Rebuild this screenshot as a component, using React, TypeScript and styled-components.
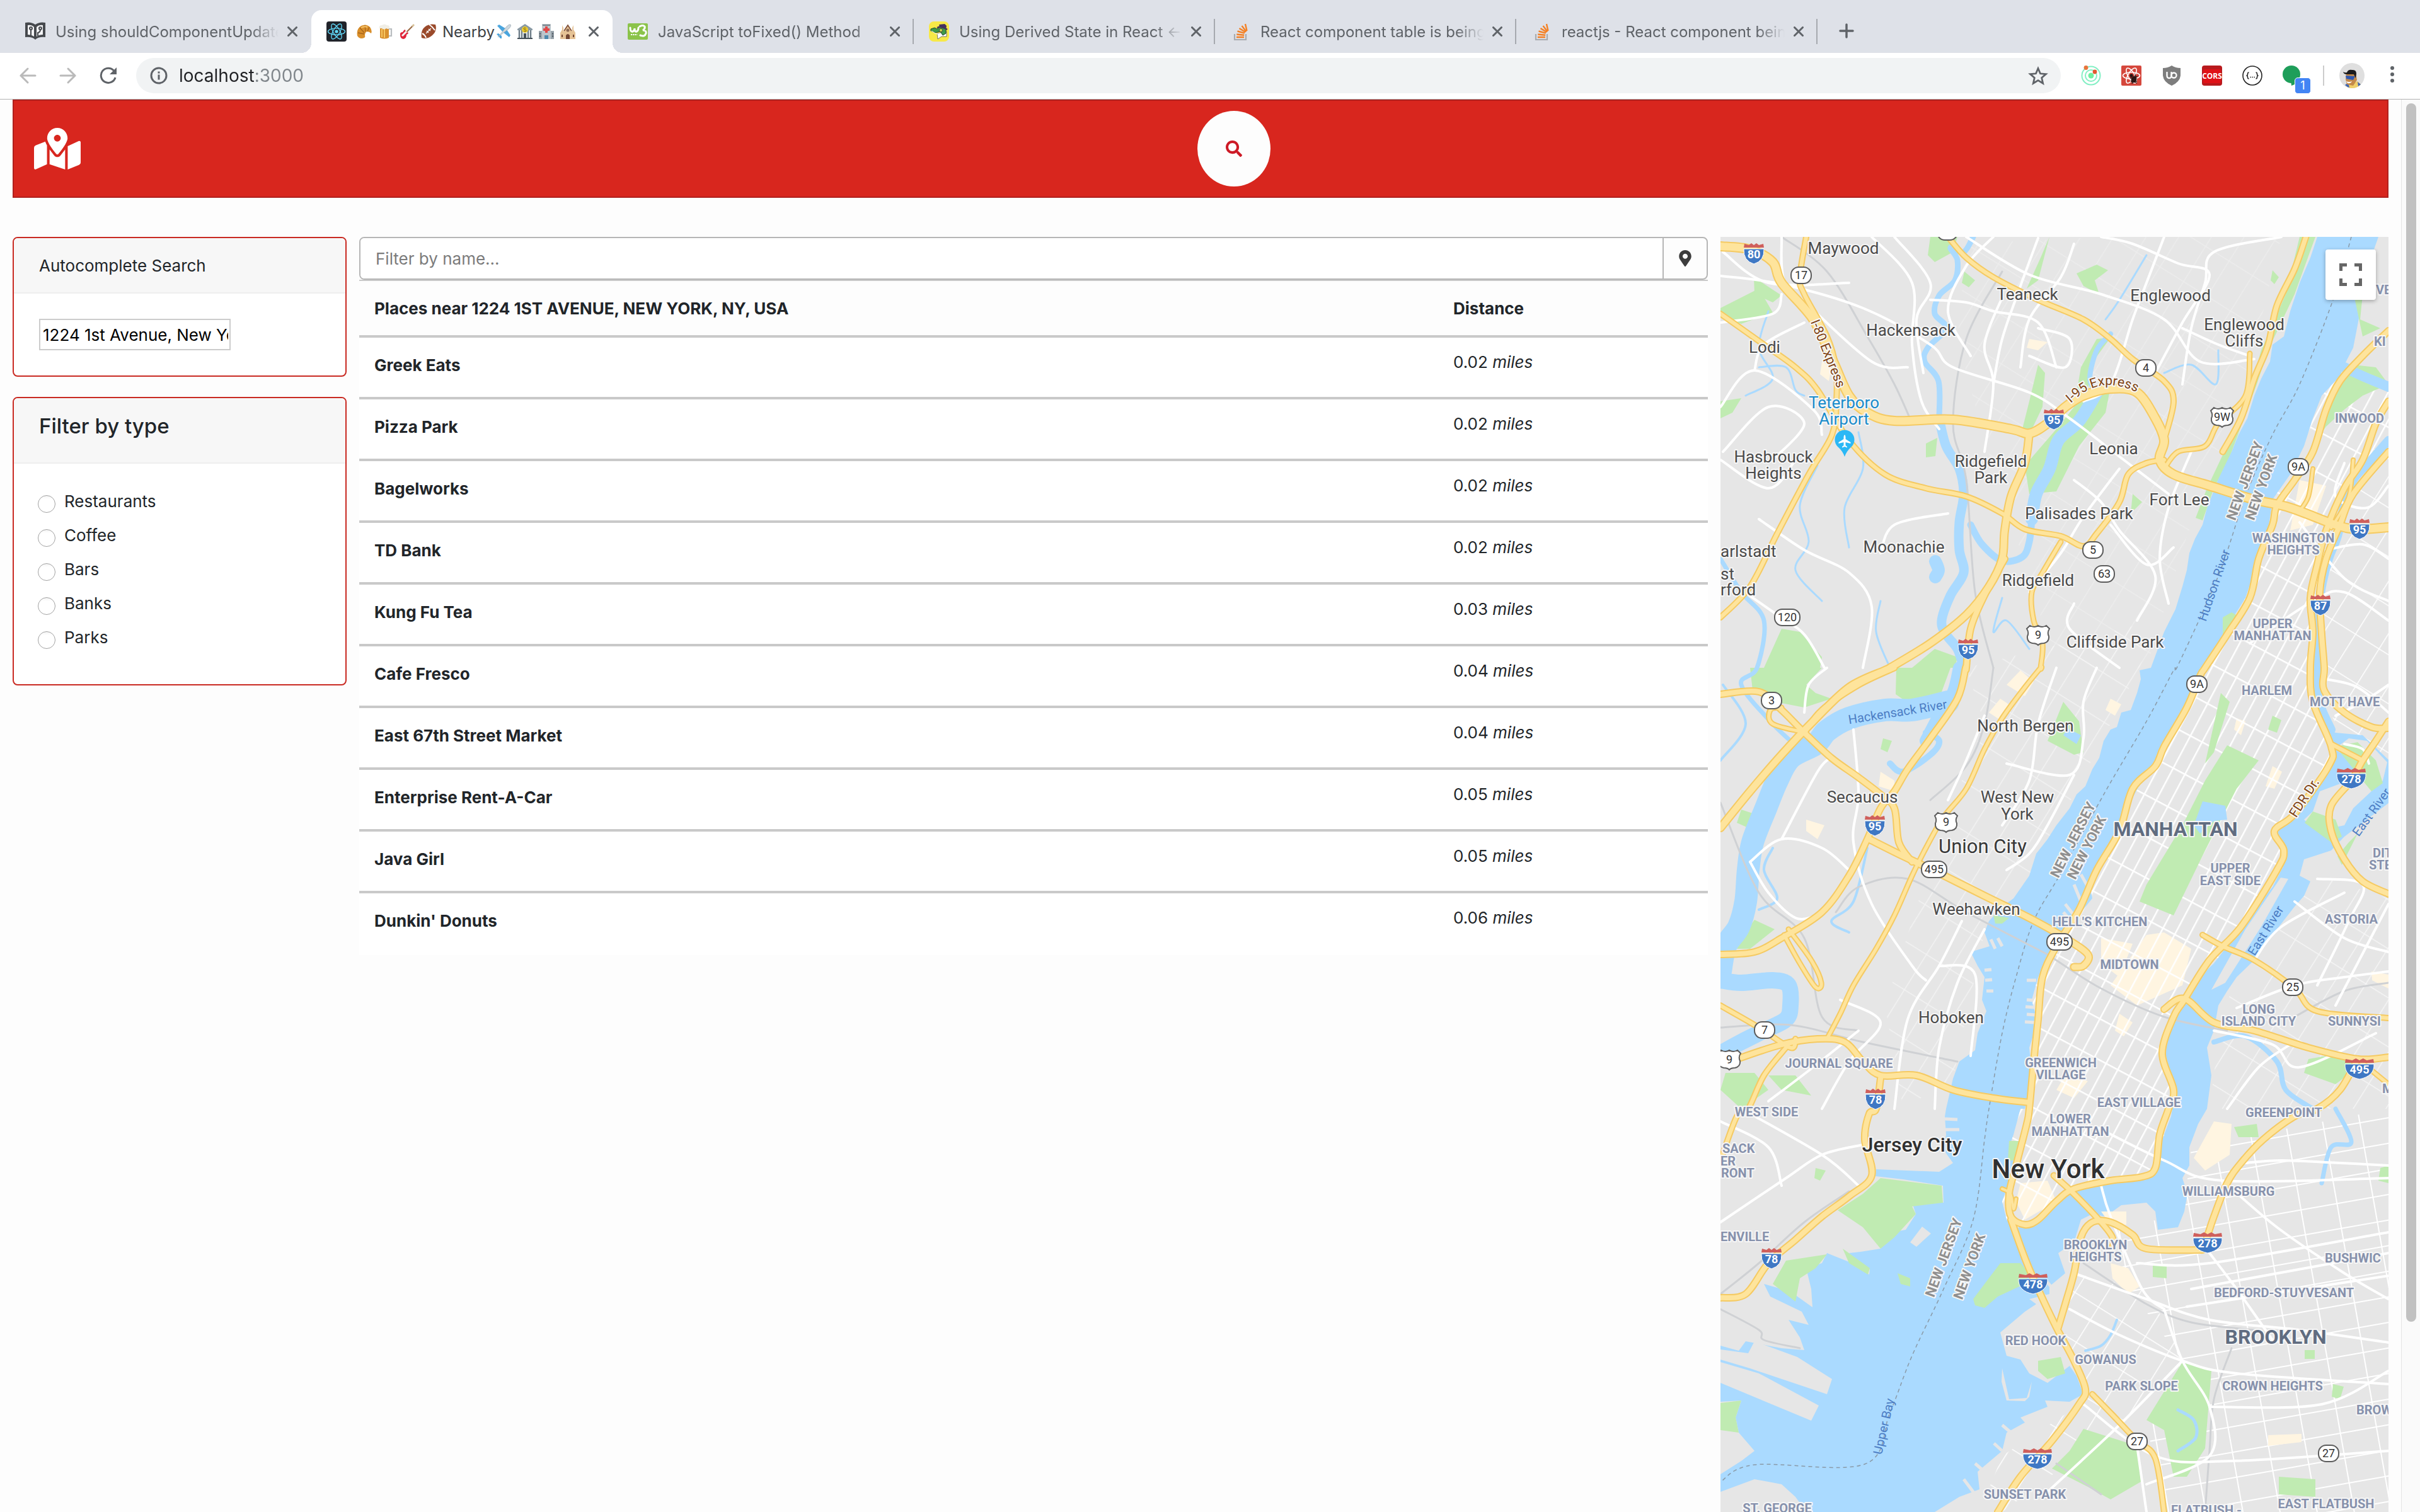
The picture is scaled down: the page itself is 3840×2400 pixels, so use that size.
import React, { useState } from "react";
import styled, { createGlobalStyle, css } from "styled-components";
import { FaMapMarkedAlt, FaMapMarkerAlt, FaSearch } from "react-icons/fa";

const GlobalStyle = createGlobalStyle`
  *, *::before, *::after { box-sizing: border-box; }
  body { margin: 0; }
  body, button, input { font-family: Inter, "Liberation Sans", sans-serif; }
  button { border: 0; padding: 0; background: none; cursor: pointer; }
`;

/* ---------- browser frame ---------- */

const Window = styled.div`
  display: flex;
  flex-direction: column;
  height: 100vh;
  overflow: hidden;
  background: #fdfdfd;
  color: #212529;
  font-size: 26px;
  line-height: 39px;
`;

const TabStrip = styled.nav`
  display: flex;
  align-items: stretch;
  height: 84px;
  padding: 16px 16px 0;
  background: #dee1e8;
`;

const Tab = styled.div<{ $active?: boolean }>`
  position: relative;
  display: flex;
  align-items: center;
  flex: 0 1 478px;
  min-width: 0;
  padding: 0 12px 0 24px;
  color: #5f6368;
  font-size: 24px;
  ${(p) =>
    p.$active &&
    css`
      background: #fff;
      color: #3c4043;
      border-radius: 16px 16px 0 0;
      &::before,
      &::after {
        content: "";
        position: absolute;
        bottom: 0;
        width: 16px;
        height: 16px;
      }
      &::before {
        left: -16px;
        background: radial-gradient(circle at 0 0, transparent 16px, #fff 16px);
      }
      &::after {
        right: -16px;
        background: radial-gradient(circle at 100% 0, transparent 16px, #fff 16px);
      }
    `}
`;

const Favicon = styled.svg`
  flex: none;
  width: 32px;
  height: 32px;
`;

const TabTitle = styled.span<{ $fade: boolean }>`
  display: flex;
  align-items: center;
  flex: 1;
  min-width: 0;
  margin: 0 6px 0 16px;
  overflow: hidden;
  white-space: nowrap;
  mask-image: ${(p) => (p.$fade ? "linear-gradient(to right, #000 calc(100% - 44px), transparent)" : "none")};
`;

const EmojiRow = styled.span<{ $after?: boolean }>`
  display: inline-flex;
  gap: 10px;
  margin: ${(p) => (p.$after ? "0 0 0 2px" : "0 10px 0 0")};
  svg {
    width: 24px;
    height: 24px;
  }
`;

const CloseButton = styled.button`
  display: grid;
  place-items: center;
  flex: none;
  width: 32px;
  height: 32px;
  color: #5f6368;
`;

const TabDivider = styled.span<{ $hidden: boolean }>`
  flex: none;
  width: 2px;
  height: 40px;
  margin: 0 -12px 0 12px;
  background: ${(p) => (p.$hidden ? "transparent" : "#a6a9af")};
`;

const NewTabButton = styled.button`
  width: 56px;
  margin-left: 18px;
  color: #5f6368;
`;

const Toolbar = styled.div`
  display: flex;
  align-items: center;
  height: 74px;
  padding: 0 16px 2px 12px;
  background: #fff;
  border-bottom: 1px solid #b2b2b2;
`;

const ToolButton = styled.button<{ $muted?: boolean }>`
  position: relative;
  display: grid;
  place-items: center;
  flex: none;
  width: 64px;
  height: 56px;
  color: ${(p) => (p.$muted ? "#bababa" : "#5f6368")};
`;

const AddressBar = styled.div`
  display: flex;
  align-items: center;
  flex: 1;
  height: 56px;
  margin: 0 16px 0 12px;
  padding: 0 20px 0 22px;
  border-radius: 28px;
  background: #f1f3f4;
  color: #5f6368;
`;

const AddressInput = styled.input`
  flex: 1;
  min-width: 0;
  margin-left: 18px;
  padding: 0;
  border: 0;
  outline: 0;
  font-size: 28px;
  line-height: 40px;
  color: transparent;
  background: linear-gradient(to right, #202124 119px, #80868b 119px);
  background-clip: text;
`;

const CountBadge = styled.span`
  position: absolute;
  left: 35px;
  top: 31px;
  width: 26px;
  height: 26px;
  border: 1px solid #fff;
  border-radius: 5px;
  background: #4285f4;
  color: #fff;
  font-size: 18px;
  line-height: 24px;
  text-align: center;
`;

const ToolDivider = styled.span`
  width: 2px;
  height: 32px;
  margin: 0 24px 0 16px;
  background: #ccc;
`;

const AvatarButton = styled.button`
  display: grid;
  width: 40px;
  height: 40px;
  margin-right: 16px;
`;

const MenuButton = styled.button`
  width: 56px;
  height: 56px;
  color: #5f6368;
`;

const Viewport = styled.div`
  display: flex;
  flex: 1;
  min-height: 0;
`;

const ScrollTrack = styled.div`
  flex: none;
  width: 30px;
  padding: 6px 6px 0 7px;
  border-left: 1px solid #e4e4e4;
  background: #fafafa;
`;

const ScrollThumb = styled.div`
  width: 16px;
  height: 86.5%;
  border-radius: 8px;
  background: #c1c1c1;
`;

/* ---------- page ---------- */

const Page = styled.div`
  display: flex;
  flex-direction: column;
  flex: 1;
  min-width: 0;
  padding: 0 20px;
  overflow: hidden;
`;

const Header = styled.header`
  display: flex;
  align-items: center;
  height: 156px;
  margin-bottom: 62px;
  padding-left: 32px;
  border: 2px solid #b0201d;
  background: #d8261e;
  color: #fff;
`;

const HeaderCenter = styled.div`
  display: flex;
  justify-content: center;
  flex: 1;
`;

const SearchButton = styled.button`
  display: grid;
  place-items: center;
  width: 116px;
  height: 120px;
  border-radius: 50%;
  background: #fdfdfd;
  color: #cd1a26;
`;

const Columns = styled.main`
  display: grid;
  grid-template-columns: minmax(0, 53fr) minmax(0, 214fr) minmax(0, 106fr);
  gap: 20px;
  flex: 1;
  min-height: 0;
`;

const Sidebar = styled.aside`
  display: flex;
  flex-direction: column;
  gap: 32px;
`;

const Card = styled.section`
  border: 2px solid #c92a22;
  border-radius: 8px;
  background: #fff;
`;

const CardHeader = styled.div`
  padding: 24px 40px 23px;
  border-bottom: 2px solid #eee;
  border-radius: 6px 6px 0 0;
  background: #f7f7f7;
`;

const CardLabel = styled.label`
  display: block;
`;

const CardTitle = styled.h2`
  margin: 0 0 15px;
  font-size: 33px;
  font-weight: 500;
  line-height: 40px;
`;

const CardBody = styled.div`
  padding: 40px;
`;

const AddressField = styled.input`
  display: block;
  width: 304px;
  max-width: 100%;
  height: 50px;
  padding: 2px 2px 2px 4px;
  border: 2px solid #ccc;
  color: #000;
  font-size: 26px;
`;

const Options = styled.fieldset`
  margin: 0;
  padding: 40px 38px;
  border: 0;
`;

const Option = styled.label`
  display: flex;
  gap: 14px;
  margin-bottom: 15px;
`;

const Radio = styled.input`
  appearance: none;
  width: 28px;
  height: 28px;
  margin: 10px 0 0;
  border: 1px solid #a2a2a2;
  border-radius: 50%;
  background: linear-gradient(#f3f3f3, #fff 20%);
  &:checked {
    background: radial-gradient(#d8261e 35%, #fff 40%);
  }
`;

const FilterGroup = styled.form`
  display: flex;
  height: 68px;
  border: 2px solid #b6b6b6;
  border-radius: 8px;
  overflow: hidden;
`;

const FilterInput = styled.input`
  flex: 1;
  min-width: 0;
  padding: 0 24px;
  border: 0;
  outline: 0;
  background: #fff;
  font-size: 26px;
  &::placeholder {
    color: #7b7b7b;
    opacity: 1;
  }
`;

const LocateButton = styled.button`
  display: grid;
  place-items: center;
  width: 70px;
  border-left: 2px solid #b6b6b6;
  color: #3d3d3d;
`;

const Table = styled.table`
  width: 100%;
  border-collapse: separate;
  border-spacing: 0;
  table-layout: fixed;
  border-top: 2px solid #c9c9c9;
  text-align: left;
`;

const HeadCell = styled.th`
  height: 90px;
  padding: 0 24px;
  border-bottom: 4px solid #c9c9c9;
  font-weight: 700;
  &:first-child {
    width: 80%;
  }
`;

const NameCell = styled.th`
  height: 98px;
  padding: 24px 24px 0;
  vertical-align: top;
  background: #fff;
  border-bottom: 4px solid #c9c9c9;
  font-weight: 700;
  tr:last-child & {
    border-color: #fff;
  }
`;

const DistanceCell = styled.td`
  padding: 24px 24px 0;
  vertical-align: top;
  background: #fff;
  border-bottom: 4px solid #c9c9c9;
  line-height: 30px;
  tr:last-child & {
    border-color: #fff;
  }
`;

const MapPane = styled.section`
  position: relative;
  min-height: 0;
  overflow: hidden;
  background: #e6e6e6;
`;

const MapCanvas = styled.svg`
  display: block;
  width: 100%;
  height: 100%;
  font-family: Roboto, sans-serif;
`;

const FullscreenButton = styled.button`
  position: absolute;
  top: 20px;
  right: 20px;
  display: grid;
  place-items: center;
  width: 80px;
  height: 80px;
  border-radius: 4px;
  background: #fff;
  box-shadow: 0 2px 6px rgba(0, 0, 0, 0.3);
`;

/* ---------- favicons and emoji ---------- */

const BookIcon = () => (
  <Favicon viewBox="0 0 32 32">
    <path d="M0 2Q9 0 16 5 23 0 32 2V25Q21 24 16 29 11 24 0 25Z" fill="#46494d" />
    <path d="M4 6Q10 5 14 9V24Q10 21 4 21ZM18 9Q22 5 28 6V21Q22 21 18 24Z" fill="#f4f4f6" />
    <g fill="none" stroke="#46494d" strokeWidth="2">
      <path d="M9 13V22M24 13Q24 17 20 18V23" />
      <circle cx="9" cy="11" r="2" />
      <circle cx="24" cy="11" r="2" />
    </g>
  </Favicon>
);

const Orbits = ({ color, width = 1 }: { color: string; width?: number }) => (
  <g fill="none" stroke={color} strokeWidth={width}>
    {[0, 60, 120].map((a) => (
      <ellipse key={a} cx="16" cy="16" rx="13.5" ry="5.2" transform={`rotate(${a} 16 16)`} />
    ))}
  </g>
);

const ReactIcon = () => (
  <Favicon viewBox="0 0 32 32">
    <rect width="32" height="32" rx="4" fill="#20232a" />
    <Orbits color="#61dafb" width={1.3} />
    <circle cx="16" cy="16" r="2.6" fill="#61dafb" />
  </Favicon>
);

const SchoolsIcon = () => (
  <Favicon viewBox="0 0 32 32">
    <rect y="3" width="32" height="26" rx="2" fill="#8bc34a" />
    <path
      d="M4 10q0 7 4 6 3-1 3-5 0 6 3 5 3-1 3-6M19 8q5-3 8 0 1 4-3 6 6 0 5 5-2 6-9 3"
      fill="none"
      stroke="#fff"
      strokeWidth="3"
      strokeLinecap="round"
    />
    <path d="M5 21h10" stroke="#fff" strokeWidth="2" strokeDasharray="2 1" />
  </Favicon>
);

const CrocodileIcon = () => (
  <Favicon viewBox="0 0 32 32">
    <rect width="32" height="32" rx="8" fill="#f7e948" />
    <path d="M13 19 28 16 28 24 20 24 14 28Z" fill="#fff" stroke="#444" strokeWidth=".7" />
    <path d="M3 12 9 10 13 12 17 9 27 12 27 19 22 22 18 16 10 18 3 15Z" fill="#3f9a48" stroke="#23482f" />
    <path d="M4 15 12 20 17 19" fill="none" stroke="#fff" />
    <path d="M16 5 25 4 28 7 27 12 17 9Z" fill="#46305e" />
    <path d="M13 10Q20 6 29 13" fill="none" stroke="#46305e" strokeWidth="2.5" />
    <circle cx="19" cy="14" r="2.6" fill="#c9d64a" stroke="#333" strokeWidth=".8" />
  </Favicon>
);

const StackIcon = () => (
  <Favicon viewBox="0 0 32 32">
    <path d="M7 20v9h18v-9" fill="none" stroke="#a9abaf" strokeWidth="2.2" />
    <g stroke="#f48024" strokeWidth="2.4">
      <path d="M10 25h12M10.300 20.500l11.900 1.200M11.500 15.500l11.300 3.200M14.500 11l9.800 6M18.500 7l7.100 9.200M24 4l2.500 11" />
    </g>
  </Favicon>
);

const Croissant = () => (
  <svg viewBox="0 0 24 24">
    <path d="M1 19Q-1 8 7 3 15-1 21 5 25 10 23 15 20 12 16 12 13 14 13 18 14 21 12 22 5 25 1 19Z" fill="#d98f2b" />
    <path d="M5 6 12 14M13 2 14 12M2 14 12 16M20 5 17 12" stroke="#a8641a" strokeWidth="1.3" />
    <path d="M7 6Q12 3 17 5" stroke="#f4c26a" strokeWidth="2" fill="none" />
  </svg>
);
const Beer = () => (
  <svg viewBox="0 0 24 24">
    <path d="M17 8h4v11h-4" fill="none" stroke="#b9bdc0" strokeWidth="2.2" />
    <path d="M3 5h14v17q-7 3-14 0Z" fill="#d9912f" />
    <path d="M6 8v13M10 8v14" stroke="#f6c661" strokeWidth="2" />
    <path d="M2 7Q1 2 6 2 10-1 14 2 19 2 18 7 16 9 13 7 9 10 6 7Z" fill="#f0eee6" />
  </svg>
);
const Guitar = () => (
  <svg viewBox="0 0 24 24">
    <path d="M8 16 21 3" stroke="#9b6b45" strokeWidth="2.2" />
    <path d="M19 3 22 0 24 2 21 5Z" fill="#d7c29a" />
    <path d="M1 18Q0 13 5 13 7 9 9 9 9 12 14 14 14 16 11 17 11 23 6 24 1 23 1 18Z" fill="#e0263a" />
    <path d="M4 19 11 12" stroke="#f4f4f4" strokeWidth="3" />
  </svg>
);
const Football = () => (
  <svg viewBox="0 0 24 24">
    <path d="M1 22Q-1 10 7 4 14-1 23 1 26 11 18 18 10 25 1 22Z" fill="#9a4a2b" />
    <path d="M2 15Q6 17 8 22M13 1Q18 4 22 10" stroke="#fff" strokeWidth="2" fill="none" />
    <path d="M8 15 16 7M9 11l3 3M12 8l3 3" stroke="#fff" strokeWidth="1.3" />
  </svg>
);
const Plane = () => (
  <svg viewBox="0 0 24 24">
    <path d="M2 3 5 1 18 9 11 13ZM21 21 23 18 15 6 11 13ZM1 16 4 15 9 19 9 23 7 23Z" fill="#4aa5de" />
    <path d="M3 21 17 4Q21 0 23 1 25 3 20 8Z" fill="#cdd7de" stroke="#8f9da6" strokeWidth=".6" />
  </svg>
);
const Bank = () => (
  <svg viewBox="0 0 24 24">
    <path d="M0 8 12 0 24 8V10H0Z" fill="#8a9aa5" />
    <path d="M1 10h22v12H1Z" fill="#dfe5e8" />
    <path d="M3 10v12M7 10v12M17 10v12M21 10v12" stroke="#6d7c87" strokeWidth="2" />
    <path d="M10 15h4v8h-4ZM0 22h24v2H0Z" fill="#46515a" />
    <circle cx="12" cy="9" r="5" fill="#f2cf2e" />
    <path d="M14 7q-4-2-4 .5 0 1.500 2 1.500 2 0 2 1.500 0 2.500-4 .5" fill="none" stroke="#6b5a12" />
  </svg>
);
const Hospital = () => (
  <svg viewBox="0 0 24 24">
    <path d="M0 11h24v13H0Z" fill="#9aa5ad" />
    <path d="M5 0h14v24H5Z" fill="#bcc5cb" />
    <path d="M6 2h12" stroke="#78838b" strokeWidth="2" />
    <path d="M10 4h4v3h3v4h-3v3h-4v-3H7V7h3Z" fill="#e04848" />
    <path d="M2 14v8M22 14v8" stroke="#5b666f" strokeWidth="2" strokeDasharray="3 1" />
    <path d="M9 18h6v6H9Z" fill="#4d89ad" />
  </svg>
);
const Church = () => (
  <svg viewBox="0 0 24 24">
    <path d="M0 14 3 9V2l2 4V12L12 3 19 12V6l2-4V9l3 5V24H0Z" fill="#e5c295" />
    <path d="M6 11 12 2 18 11" fill="none" stroke="#7b4a33" strokeWidth="1.6" />
    <circle cx="12" cy="10" r="2.500" fill="#8d6a55" />
    <path d="M9 24V18q3-4 6 0v6ZM2 17h2v4H2ZM20 17h2v4h-2Z" fill="#714633" />
  </svg>
);

const tabs = [
  { icon: <BookIcon />, title: "Using shouldComponentUpdate", divider: false },
  { icon: <ReactIcon />, title: "Nearby", active: true, divider: false },
  { icon: <SchoolsIcon />, title: "JavaScript toFixed() Method", divider: true },
  { icon: <CrocodileIcon />, title: "Using Derived State in React ←", divider: true },
  { icon: <StackIcon />, title: "React component table is being", divider: true },
  { icon: <StackIcon />, title: "reactjs - React component being", divider: true },
];

const Cross = () => (
  <svg width="16" height="16" viewBox="0 0 16 16" stroke="currentColor" strokeWidth="3" strokeLinecap="round">
    <path d="M1.500 1.500l13 13M14.500 1.500l-13 13" />
  </svg>
);

const extensions = [
  {
    name: "Apollo",
    icon: (
      <Favicon viewBox="0 0 32 32">
        <g fill="none" stroke="#84efc4" strokeWidth="2">
          <circle cx="16" cy="16" r="14.500" />
          <circle cx="16" cy="16" r="9" />
        </g>
        <circle cx="16" cy="16" r="4.500" fill="#6ff0a0" />
        <circle cx="8" cy="3.500" r="3.400" fill="#e8743b" />
        <circle cx="22" cy="10" r="3.400" fill="#e2582f" />
      </Favicon>
    ),
  },
  {
    name: "React Developer Tools",
    icon: (
      <Favicon viewBox="0 0 32 32">
        <rect width="32" height="32" rx="2" fill="#d5473c" />
        <Orbits color="#fff" width={1.6} />
        <g stroke="#2a1614" strokeWidth="1.300">
          <ellipse cx="20" cy="22" rx="3.500" ry="5" fill="#2a1614" transform="rotate(25 20 22)" />
          <circle cx="16" cy="16" r="2" fill="#2a1614" />
          <path d="M14 20h4l8-3M15 25l10 0M17 29l1-4 7 3M22 14l1 5" fill="none" />
        </g>
      </Favicon>
    ),
  },
  {
    name: "uBlock",
    icon: (
      <Favicon viewBox="0 0 32 32">
        <path d="M16 0Q22 4 30 4V16Q29 26 16 32 3 26 2 16V4Q10 4 16 0Z" fill="#7d7d7d" />
        <path d="M8.500 10v6q0 4 3.500 4t3.500-4v-6" fill="none" stroke="#fff" strokeWidth="2.300" />
        <circle cx="19.500" cy="15.500" r="4" fill="none" stroke="#fff" strokeWidth="2.300" />
      </Favicon>
    ),
  },
  {
    name: "CORS",
    icon: (
      <Favicon viewBox="0 0 32 32">
        <rect width="32" height="32" rx="4" fill="#b81a1d" />
        <rect x="2" y="6" width="28" height="22" rx="2" fill="#df1117" />
        <text x="16" y="21" textAnchor="middle" fontFamily="Open Sans, sans-serif" fontWeight="700" fontSize="12" fill="#fff">
          CORS
        </text>
      </Favicon>
    ),
  },
  {
    name: "JSON Viewer",
    icon: (
      <Favicon viewBox="0 0 32 32">
        <circle cx="16" cy="16" r="15" fill="#fff" stroke="#222" strokeWidth="1.600" />
        <path
          d="M10.500 11q-2 0-2 2.500t-2 2.500q2 0 2 2.500t2 2.500M21.500 11q2 0 2 2.500t2 2.500q-2 0-2 2.500t-2 2.500"
          fill="none"
          stroke="#222"
          strokeWidth="1.500"
        />
        <path d="M12.500 18.500h1.500M15.500 18.500h1.500M18.500 18.500h1.500" stroke="#222" strokeWidth="1.500" />
      </Favicon>
    ),
  },
  {
    name: "Hangouts",
    badge: "1",
    icon: (
      <Favicon viewBox="0 0 32 32">
        <circle cx="14" cy="14" r="14" fill="#1e9e5a" />
        <path d="M13 24h6v6l-5 2Z" fill="#1e9e5a" />
      </Favicon>
    ),
  },
];

const Avatar = () => (
  <svg width="40" height="40" viewBox="0 0 40 40">
    <circle cx="20" cy="20" r="20" fill="#dfdfdf" />
    <path d="M10 36Q13 31 18 33L29 29 34 34Q28 40 20 40 14 40 10 36Z" fill="#f0cf6a" />
    <path d="M9 35 14 31 16 39Q12 38 9 35ZM29 30 34 34 30 37Z" fill="#3d64b5" />
    <path d="M11 17 26 16 28 27 22 36 12 34 10 26Z" fill="#c58a4a" />
    <path d="M6 14Q9 16 12 15 14 10 20 11 27 10 27 17L26 24 23 18 12 18Q7 18 6 14Z" fill="#1b1b1d" />
    <path d="M10 20 25 21 22 27 11 25Z" fill="#2f58b0" />
    <path d="M11 29Q16 31 20 29 18 33 13 32Z" fill="#fff" />
  </svg>
);

/* ---------- map ---------- */

/*
 * Geometry is written on three stacked survey sheets: n (north), m (middle)
 * and s (south). A letter in a line switches sheet; trace() turns the sheet
 * positions into map units.
 */
type Point = [number, number];

const sheets: Record<string, (x: number, y: number) => Point> = {
  n: (x, y) => [(x - 14) / 1.4, (y - 36) / 2.24],
  m: (x, y) => [(x - 14) / 1.4, y / 2.24 + 684],
  s: (x, y) => [(x - 14) / 1.4, y / 2.45 + 1384],
};

const at = (sheet: string, x: number, y: number): Point => {
  const [px, py] = sheets[sheet](x, y);
  return [Math.round(px), Math.round(py)];
};

const trace = (line: string): Point[] => {
  let sheet = "n";
  const points: Point[] = [];
  line
    .trim()
    .split(/\s+/)
    .forEach((token) => {
      if (token in sheets) {
        sheet = token;
        return;
      }
      const [x, y] = token.split(",").map(Number);
      points.push(at(sheet, x, y));
    });
  return points;
};

const area = (line: string) => `M${trace(line).join("L")}Z`;

const curve = (line: string) => {
  const p = trace(line);
  let d = `M${p[0]}`;
  for (let i = 0; i < p.length - 1; i++) {
    const a = p[i - 1] ?? p[i];
    const b = p[i];
    const c = p[i + 1];
    const e = p[i + 2] ?? c;
    d += `C${b[0] + (c[0] - a[0]) / 6},${b[1] + (c[1] - a[1]) / 6} ${c[0] - (e[0] - b[0]) / 6},${c[1] - (e[1] - b[1]) / 6} ${c}`;
  }
  return d;
};

const bayAndRivers =
  "n 1340,36 1325,110 1300,200 1280,300 1265,390 1240,420 1235,480 1215,540 1200,600 1185,680 1165,740 1150,800 1130,850 1115,920 1095,1000 1085,1060 1068,1110 1055,1160 1050,1220 1040,1280 1025,1360 1000,1440 985,1500 970,1568 " +
  "m 945,10 948,40 940,90 925,150 905,160 895,210 880,220 865,260 855,320 840,360 825,420 805,450 790,500 760,560 740,610 715,660 700,740 665,820 640,850 610,900 600,940 612,990 570,1010 585,1060 600,1100 595,1180 605,1220 585,1300 580,1360 545,1400 530,1460 515,1568 " +
  "s 512,30 515,100 510,160 530,210 500,245 360,235 358,262 420,275 508,300 510,365 440,362 448,410 425,470 395,480 370,545 325,555 300,560 320,600 346,625 344,645 300,595 250,560 240,600 205,620 215,700 218,772 170,710 110,680 125,730 195,790 210,840 165,820 190,890 200,938 150,930 70,905 55,940 14,920 14,1140 60,1135 48,1200 55,1260 90,1330 60,1370 14,1420 14,1490 90,1440 150,1460 180,1510 205,1568 " +
  "490,1568 545,1510 590,1480 585,1410 640,1330 650,1260 690,1220 680,1200 740,1160 735,1135 790,1140 820,1110 805,1040 790,1000 740,1065 700,1030 680,975 650,960 635,870 690,790 715,760 700,740 745,720 745,690 780,640 765,560 800,520 815,430 840,410 870,420 905,375 960,365 980,400 985,470 1030,460 1045,400 1052,330 1040,270 1055,220 1055,150 1075,60 1095,0 " +
  "m 1095,1568 1105,1450 1095,1350 1110,1290 1120,1200 1140,1150 1160,1100 1200,1040 1230,970 1290,850 1310,810 1325,760 1300,740 1310,680 1370,650 1400,600 1500,480 1500,330 1440,240 1380,230 1340,200 n 1350,1100 1400,490 1420,430 1430,350 1440,250 1450,150 1475,36";

const manhattan =
  "n 1400,490 1390,530 1350,600 1330,680 1310,780 1280,880 1240,970 1230,1080 1210,1180 1180,1320 1130,1450 1090,1568 " +
  "m 1080,0 1070,60 1030,180 1010,250 990,320 950,400 920,490 890,580 870,660 835,770 840,820 800,900 745,1020 720,1100 705,1180 718,1260 700,1350 705,1440 690,1568 " +
  "s 680,0 665,100 655,150 668,220 640,360 650,430 670,462 700,450 750,370 800,310 870,290 960,270 990,200 1000,100 1015,30 " +
  "m 1025,1500 1010,1420 1000,1350 1020,1260 1040,1190 1060,1130 1110,1050 1150,970 1190,880 1240,780 1265,700 1265,640 1250,590 1255,560 1290,520 1320,440 1370,340 1375,290 1350,200 1325,100 1325,0 " +
  "n 1330,1568 1340,1400 1350,1250 1375,1150 1380,1040 1400,950 1440,870 1470,780 1500,730 1500,560 1450,520";

const piers = [
  "s 14,935 75,950 90,905 185,965 262,1050 250,1110 80,1010 14,975",
  "s 14,985 100,1030 232,1155 215,1212 14,1065",
  "s 640,1010 655,1130 695,1125 705,1060 700,1120 690,1138 650,1135 638,1060",
  "s 436,520 462,458 482,485 450,537",
  "m 1275,750 1258,745 1180,930 1105,1145 1135,1120 1215,920",
  "m 1378,290 1410,250 1450,260 1495,335 1485,400 1420,500 1400,560 1340,580 1310,540 1330,510 1345,440 1395,410 1430,340",
];

/* Slips along the Hudson waterfront, drawn as short strokes over the water. */
const slips = [
  "m 800,770 815,830 m 815,830 800,770",
  "m 780,840 800,880",
  "m 775,870 795,905",
  "m 815,735 835,790",
  "m 695,1180 712,1182",
  "m 692,1205 712,1208",
  "m 695,1232 714,1235",
  "m 690,1258 712,1262",
  "m 715,1110 695,1112",
  "m 600,1075 616,1072",
  "m 602,1110 618,1108",
  "m 605,1150 620,1148",
  "m 630,960 640,990",
  "m 615,965 624,1000",
  "s 512,40 540,42",
  "s 514,80 545,82",
  "s 735,730 720,700",
  "s 750,695 735,665",
  "s 640,1330 622,1300",
  "s 660,1260 640,1230",
  "s 600,1410 580,1380",
  "s 580,1500 555,1440",
];

const parks = [
  "n 1300,36 1335,36 1290,240 1230,440 1205,560 1150,800 1110,930 1085,1045 1070,1035 1095,930 1180,640 1215,440 1270,240",
  "n 480,36 540,36 530,90 490,125 474,100",
  "n 14,290 100,220 130,305 60,345 14,320",
  "n 88,180 150,245 130,270 90,240",
  "n 700,620 720,490 735,520 730,640 700,740 685,720",
  "n 880,395 845,470 820,640 880,570 870,660 810,780 760,940 700,950 690,850 760,720 800,640 815,500 850,400",
  "n 805,165 850,135 875,155 845,190 855,240 820,210",
  "n 745,36 720,190 695,220 725,110",
  "n 1390,560 1420,490 1470,500 1498,560 1440,600 1400,650 1360,710 1340,760",
  "n 1420,230 1440,240 1435,330 1480,360 1440,390",
  "n 1240,155 1255,180 1245,205 1236,190",
  "n 470,770 495,750 492,815 470,820",
  "n 1130,1390 1150,1370 1165,1385 1130,1450",
  "n 150,1430 190,1440 240,1530 235,1568 110,1568",
  "n 440,1568 490,1500 540,1530 535,1568",
  "n 14,620 60,610 40,660 14,680",
  "n 556,160 580,190 565,215 550,200",
  "n 930,950 950,980 925,1020",
  "m 80,0 240,0 205,60 225,90 260,110 200,140 150,125 85,80",
  "m 405,0 525,0 500,110 435,130 403,95",
  "m 775,120 810,190 820,300 800,310 740,260",
  "m 1140,275 1210,330 1160,430 1090,650 1020,880 945,830 960,770 1040,560 1090,400",
  "m 1240,170 1260,185 1250,230 1230,220",
  "m 90,895 135,930 80,1000 44,1000",
  "m 1330,510 1380,540 1395,600 1370,620 1312,550",
  "m 1380,280 1430,265 1470,330 1485,410 1460,440 1440,400",
  "m 60,505 90,520 75,570 50,550",
  "m 375,250 395,260 385,300 370,290",
  "m 620,880 655,890 640,910 625,910",
  "m 1320,1390 1390,1370 1430,1420 1380,1480 1310,1440",
  "m 1410,620 1430,590 1395,700 1385,670",
  "m 25,1440 90,1440 120,1500 60,1568 14,1500",
  "m 120,1450 180,1450 215,1520 150,1500",
  "m 1125,90 1145,120 1110,300 1090,340",
  "s 370,270 505,300 508,365 440,380 448,410 400,500 370,545 330,460 275,395 330,330",
  "s 160,590 250,565 225,620 190,660 180,750 130,680",
  "s 575,740 600,680 635,600 680,600 700,640 690,680 630,730 600,775 580,765",
  "s 408,640 435,660 436,690 415,680",
  "s 1040,985 1105,1020 1090,1320 1050,1430 1020,1430 1000,1250 960,1210",
  "s 820,1245 940,1310 948,1450 880,1520 830,1470 750,1400 790,1330",
  "s 720,980 770,965 780,1030 740,1050 720,1020",
  "s 1255,1430 1335,1440 1335,1510 1255,1500",
  "s 1155,70 1205,60 1210,110 1165,110",
  "s 1312,938 1334,938 1334,972 1312,972",
  "s 975,600 1005,605 1005,660 975,655",
  "s 14,1145 60,1135 48,1200 55,1260 14,1250",
  "s 1375,1070 1398,1080 1390,1130 1372,1120",
  "s 225,230 248,240 235,280 222,270",
  "s 655,125 680,125 665,200 652,200",
  "s 1480,230 1498,220 1498,290 1475,280",
  "s 285,545 346,620 342,645 300,600",
];

const districts = [
  "m 1000,940 1060,1000 1040,1130 940,1200 880,1130 960,950",
  "m 860,960 930,980 900,1100 860,1050",
  "m 680,10 710,50 690,100 650,60",
  "m 635,110 665,140 640,190 610,160",
  "m 880,110 905,130 890,170 870,150",
  "m 205,540 245,560 230,610 205,580",
  "m 370,370 400,400 400,440 365,420",
  "m 1240,350 1262,370 1245,430 1225,420",
  "m 1160,180 1180,190 1170,240 1155,220",
  "m 780,1450 830,1470 800,1530 760,1500",
  "m 900,1230 930,1260 910,1310 890,1290",
  "m 1460,1080 1498,1090 1498,1140 1462,1110",
  "s 680,290 740,280 760,360 690,430 670,360",
  "s 1110,50 1150,60 1145,180 1090,240 1065,190",
  "s 860,400 915,400 915,450 880,450",
  "s 880,600 920,620 945,690 920,720 885,660",
  "s 1230,1270 1305,1265 1305,1295 1230,1310",
  "n 1300,900 1360,920 1330,1060 1280,1080",
  "n 240,480 260,500 255,550 235,525",
  "n 700,400 740,410 720,440 695,430",
];

const rivers: [number, string][] = [
  [9, "n 575,36 555,90 525,75 540,120 535,190 500,245 490,310 515,360 475,430 468,480 498,550 500,680"],
  [15, "n 500,680 515,780 545,860 555,950 545,1050 545,1150 555,1230 525,1310 505,1400 515,1450 540,1500 555,1568"],
  [20, "m 545,0 530,90 500,170 470,260"],
  [36, "m 520,120 440,150 380,150 300,180 250,225 225,270 170,320 140,400 115,500 85,620 75,720 70,830 55,920 25,990 14,1080"],
  [26, "m 14,1110 60,1120 130,1110 165,1130 170,1200 160,1250 110,1290 60,1330 14,1370"],
  [8, "n 880,380 850,440 835,540 850,590"],
  [20, "n 850,590 810,690 765,760 745,860 715,950 705,1040"],
  [11, "n 705,1040 700,1120 685,1175 640,1188 595,1130 570,1060"],
  [20, "n 492,1190 498,1220 492,1245"],
  [14, "n 1498,760 1460,830 1420,900 1398,1000 1385,1100 1365,1180 1348,1290 1340,1420 1340,1568 m 1335,40 1345,130 1370,220"],
  [16, "n 1400,500 1440,530 1498,570"],
  [7, "n 14,1180 60,1300 110,1400 95,1568 m 60,60 130,200 190,290"],
  [3, "n 100,500 160,500 180,580 200,600"],
  [3, "n 120,300 100,430 130,540 70,600"],
  [3, "n 230,850 190,990 210,1120 180,1220 240,1330"],
  [3, "n 320,730 330,860 290,1000 300,1140"],
  [3, "n 960,100 900,260 870,330"],
  [3, "n 1120,440 1115,560 1060,490 1000,520"],
  [3, "n 390,1568 360,1440 370,1330"],
  [3, "n 700,1500 650,1400 620,1440 640,1320"],
  [10, "m 470,230 500,260 480,310 420,370 390,340"],
  [4, "m 20,60 70,200 14,330"],
  [4, "m 130,640 110,720 140,820 100,860"],
  [4, "m 340,640 310,830 260,900 300,940"],
  [8, "m 1110,1330 1180,1310 1250,1400 1270,1500 1330,1568"],
  [7, "s 1380,0 1415,130 1370,150 1350,290"],
  [4, "s 825,940 860,920 880,880 895,820"],
  [22, "s 1000,240 1010,130 1060,0"],
  [5, "s 1030,1170 1065,1210 1070,1280 1030,1330"],
];

const rails = [
  "n 150,36 250,160 340,390 400,560 440,700",
  "n 640,160 560,400 530,700 560,900 580,1300 620,1568",
  "m 620,0 600,200 560,350 480,470",
  "m 14,480 100,800 200,960 240,1240 320,1290",
  "m 270,870 320,780 430,750 560,870 740,1020",
  "m 740,1020 860,1140 1000,1240 1140,1290",
  "m 1498,1120 1400,1150 1290,1240",
  "m 14,1280 170,1270 330,1330 540,1400",
  "s 300,320 200,440 100,600 14,720",
  "s 820,600 960,760 1060,830 1200,860",
  "s 760,1380 860,1500",
  "s 1150,930 1110,1130 1100,1330 1090,1568",
  "s 14,780 100,860 110,900 190,930",
];

const streets = [
  "n 14,175 150,205 330,290 480,420 530,500 700,590 790,680 910,830 1010,950",
  "n 150,36 155,190 210,280 350,480 430,500",
  "n 20,90 120,200 300,200",
  "n 350,36 440,200 440,420 460,620 500,720",
  "n 400,36 480,200 450,330 465,520",
  "n 620,36 560,140 520,300 570,460",
  "n 14,340 130,310 150,240",
  "n 14,640 90,510 220,650 240,740",
  "n 90,510 110,420 200,340",
  "n 130,830 200,700 120,640 20,800",
  "n 14,830 120,930 180,830",
  "n 640,250 600,420 620,560 600,800",
  "n 720,40 680,210 640,400 620,560",
  "n 480,260 560,270 620,300 720,340 760,500",
  "n 560,36 700,170 860,240 1000,330 1080,480 1200,470",
  "n 800,60 770,180 700,330 680,500",
  "n 1000,36 960,200 930,330 880,560 820,620",
  "n 860,36 930,60 1030,130 1100,170 1040,340 980,520",
  "n 1260,36 1110,90 1090,200 1060,360 1040,560",
  "n 1040,360 1120,420 1190,460",
  "n 720,360 790,400 780,500 700,460",
  "n 800,900 860,980 900,1080 980,1240 940,1400",
  "n 900,860 820,1030 770,1160 700,1300",
  "n 1060,800 1010,1000 990,1180 1010,1340",
  "n 880,1060 960,1200 1020,1140",
  "n 100,1040 200,1150 300,1230 350,1350 330,1568",
  "n 370,1160 400,1060 520,1020",
  "n 60,1290 140,1380 200,1450 245,1568",
  "n 800,1340 790,1430 900,1568",
  "n 1190,1480 1330,1330 1400,1300 1498,1400",
  "n 1300,1050 1400,1250 1498,1330",
  "n 1400,840 1380,960 1450,1000 1498,920",
  "n 1360,1150 1440,1130 1498,1180",
  "m 310,220 320,450 310,620 350,840 440,1060 470,1110",
  "m 150,610 230,370 260,320",
  "m 80,690 150,610 240,640 300,720",
  "m 80,690 120,800 180,890 230,880",
  "m 200,160 210,60 250,0",
  "m 760,0 720,200 700,400 640,560",
  "m 850,0 820,120 820,250 790,380 650,340",
  "m 600,170 560,330 520,470",
  "m 800,380 740,560 700,660 650,720",
  "m 550,900 500,1060 430,1250 400,1568",
  "m 600,930 540,1120 500,1350 490,1568",
  "m 500,1060 580,1090 570,1380",
  "m 280,1180 370,1260 300,1400 240,1568",
  "m 320,1290 220,1420 120,1540",
  "m 1340,750 1440,770 1410,900 1340,1130",
  "m 1290,830 1400,960 1498,1010",
  "m 1200,1040 1260,920 1400,800",
  "m 1498,840 1380,1200",
  "m 1160,1210 1290,1130 1400,1100 1498,1080",
  "m 1110,1290 1240,1340 1300,1420 1470,1300",
  "m 1140,1568 1210,1420 1280,1340",
  "m 1360,40 1430,70 1498,160",
  "m 1380,170 1440,120 1498,60",
  "m 1400,270 1440,290 1455,340",
  "s 14,440 160,270 240,180 330,140",
  "s 60,0 240,180 320,300",
  "s 14,50 120,150 150,300",
  "s 850,70 1000,200 1130,280 1498,270",
  "s 1130,280 1250,460 1400,640 1498,740",
  "s 860,300 880,420 950,700 1000,780",
  "s 800,640 960,740 1100,820 1300,860 1498,910",
  "s 790,780 900,880 1040,980 1160,1030 1498,1070",
  "s 1040,980 900,1230 740,1490",
  "s 1000,780 1040,980 1100,1160 1100,1350 960,1460",
  "s 1100,1160 1350,1150 1498,1020",
  "s 820,1150 980,1350 1150,1370 1498,1330",
  "s 940,1310 960,1568",
  "s 1060,700 1498,560",
  "s 940,600 1100,600 1498,480",
  "s 1050,770 1498,650",
  "s 1180,210 1260,200 1390,210 1498,220",
  "s 1100,560 1160,700 1240,900",
];

const highways: [number, string][] = [
  [7, "n 205,36 190,180 200,240 250,390 270,500 272,620 262,740 210,880 140,1090 80,1280 14,1390"],
  [7, "n 14,310 110,420 180,500 230,580 300,760 380,880 470,930 560,960 640,1020 690,1075 770,1100 820,1135 850,1090 900,980 920,880 960,840 1000,830"],
  [7, "n 520,36 560,110 620,180 720,260 820,330 880,400 930,470 1000,550 1020,620 1000,760"],
  [8, "n 1315,36 1290,150 1250,280 1230,420 1200,540 1170,680 1130,800"],
  [6, "n 1190,450 1180,600 1120,700 1090,780 1030,800 1000,860"],
  [6, "n 770,1120 730,1230 705,1300 710,1400 730,1480 725,1568 m 725,0 690,70 640,180 600,290 560,430 510,530 470,640 440,740 400,880 360,1000 310,1130 280,1230 250,1320"],
  [9, "n 1498,370 1440,460 1390,550 1360,650 1330,800 1290,900 1250,990 1240,1060 1210,1180 1190,1320 1140,1450 1090,1568 m 1080,30 1050,140 1000,280 980,350 930,430 900,580 850,720 810,860 760,990 730,1100 720,1250 710,1400 700,1568 s 695,60 670,220 655,330 660,420 690,450 720,430 760,360 800,310 880,280 950,265 980,230 990,100 1010,0 m 1020,1500 995,1370 1020,1240 1045,1180 1100,1040 1170,920 1250,720 1265,650 1245,580 1290,520 1365,350 1370,280 1330,120 1325,0 n 1330,1440 1325,1320 1340,1200 1360,1080 1400,930 1440,830 1470,700 1498,620"],
  [9, "n 1498,800 1420,950 1390,1060 1360,1180 1345,1300 1350,1450 1355,1568 m 1355,80 1400,160 1460,210 1498,215"],
  [9, "m 1498,190 1470,260 1440,330 1415,400 1370,490 1370,580 1400,680 1440,760 1498,805"],
  [5, "n 1330,860 1320,960 1300,1010"],
  [5, "n 1420,830 1410,960 1370,1070"],
  [7, "m 1370,270 1440,330"],
  [6, "m 205,230 130,200 125,150 150,140"],
  [6, "m 155,950 190,1050 225,1135 238,1120 215,1040 165,930"],
  [9, "m 14,95 100,85 150,150 200,230 260,320 320,390 370,450 400,500 410,620 440,690"],
  [8, "m 400,0 320,60 240,150 200,230"],
  [7, "m 1085,950 1130,990 1200,1040 1290,1140 1340,1220 1498,1245"],
  [9, "m 1000,1215 1045,1175 1110,1260 1200,1290 1320,1350 1430,1390 1498,1385"],
  [6, "m 1430,1390 1498,1480"],
  [9, "m 1430,1390 1390,1500 1340,1568 s 1290,30 1220,120 1170,210 1140,290 1110,420 1095,500"],
  [9, "s 1085,550 960,545 930,490 880,440 840,440 815,500 800,640 780,760 765,850"],
  [9, "s 660,430 690,580 720,700 760,850 800,980 825,1090 810,1150 750,1290 680,1430 630,1568"],
  [8, "s 755,260 800,330 860,440 885,500 885,540"],
  [7, "s 840,1110 890,1200 940,1290 980,1360 1000,1568"],
  [7, "m 14,1200 100,1280 170,1350 180,1320"],
  [9, "m 50,1390 150,1340 230,1320 290,1330 330,1400 370,1450 450,1450 530,1500 620,1530 700,1545"],
  [7, "m 160,1350 110,1450 75,1568 s 50,30 14,200"],
  [9, "m 370,1460 360,1568 s 345,20 335,120 350,260 300,340 240,420 180,510 120,600 70,720 14,735"],
  [5, "s 640,310 658,330 665,390 670,350"],
  [11, "n 700,735 690,840 660,960 645,1080 640,1180 610,1280 560,1380 480,1480 390,1568 m 380,10 300,70 220,190 150,310 80,440 14,570"],
  [9, "n 645,1180 600,1310 570,1430 560,1568 m 558,0 540,110 480,250 430,360 400,440 370,500 340,610 300,740 240,870 150,960 90,1010 14,1020"],
  [10, "m 345,610 420,670 500,730 600,810 700,890 780,960 830,1020 820,1060 800,1065"],
  [13, "n 14,70 80,80 130,125 150,200 220,330 265,480 300,600 340,660 400,690 530,685 660,720 700,735 740,700 780,640 820,600 880,575 940,590 980,680 1000,760 990,830 1020,880 1100,920 1200,970 1280,1000 1380,1060 1430,1075 1498,1068"],
];

const stateLine =
  "n 1415,36 1375,260 1300,560 1240,740 1180,960 1120,1240 1030,1560 m 1020,10 960,190 870,440 770,730 710,900 670,1100 640,1300 610,1568 s 600,120 575,430 510,700 440,960 390,1180 335,1382 90,1384 14,1450";

type LabelKind = "town" | "city" | "capital" | "metro" | "area" | "borough" | "water" | "road" | "line" | "air";

const kinds: Record<LabelKind, { size: number; fill: string; weight?: number; halo?: string }> = {
  town: { size: 26, fill: "#4b4b4b" },
  city: { size: 31, fill: "#383838" },
  capital: { size: 32, fill: "#303030", weight: 500 },
  metro: { size: 42, fill: "#303030", weight: 500 },
  area: { size: 20, fill: "#8691ac", weight: 700 },
  borough: { size: 32, fill: "#606c80", weight: 700 },
  water: { size: 20, fill: "#4c7dc4", halo: "none" },
  road: { size: 21, fill: "#7f4212" },
  line: { size: 22, fill: "#8f8f8f", weight: 700 },
  air: { size: 26, fill: "#1a8ccb" },
};

type Label = [string, number, number, string, LabelKind, number?];

const labels: Label[] = [
  ["n", 287, 77, "Maywood", "town"],
  ["n", 696, 240, "Teaneck", "town"],
  ["n", 1013, 245, "Englewood", "town"],
  ["n", 1178, 347, "Englewood", "town"],
  ["n", 1178, 405, "Cliffs", "town"],
  ["n", 437, 367, "Hackensack", "town"],
  ["n", 112, 428, "Lodi", "town"],
  ["n", 887, 788, "Leonia", "town"],
  ["n", 132, 817, "Hasbrouck", "town"],
  ["n", 132, 876, "Heights", "town"],
  ["n", 615, 833, "Ridgefield", "town"],
  ["n", 615, 892, "Park", "town"],
  ["n", 1033, 970, "Fort Lee", "town"],
  ["n", 811, 1019, "Palisades Park", "town"],
  ["n", 422, 1137, "Moonachie", "town"],
  ["n", 719, 1256, "Ridgefield", "town"],
  ["n", 891, 1477, "Cliffside Park", "town"],
  ["n", 288, 624, "Teterboro", "air"],
  ["n", 288, 683, "Airport", "air"],
  ["n", 1286, 1107, "WASHINGTON", "area"],
  ["n", 1286, 1150, "HEIGHTS", "area"],
  ["n", 1433, 680, "INWOOD", "area"],
  ["n", 1241, 1412, "UPPER", "area"],
  ["n", 1241, 1455, "MANHATTAN", "area"],
  ["n", 254, 450, "I-80 Express", "road", 68],
  ["n", 1179, 902, "NEW JERSEY", "line", -70],
  ["n", 1215, 925, "NEW YORK", "line", -70],
  ["n", 1110, 1275, "Hudson River", "water", -71],
  ["m", 408, 157, "Hackensack River", "water", -9],
  ["m", 692, 207, "North Bergen", "town"],
  ["m", 329, 460, "Secaucus", "town"],
  ["m", 674, 460, "West New", "town"],
  ["m", 674, 519, "York", "town"],
  ["m", 597, 633, "Union City", "city"],
  ["m", 583, 858, "Weehawken", "town"],
  ["m", 526, 1244, "Hoboken", "town"],
  ["m", 1228, 81, "HARLEM", "area"],
  ["m", 1146, 713, "UPPER", "area"],
  ["m", 1146, 756, "EAST SIDE", "area"],
  ["m", 1025, 573, "MANHATTAN", "borough"],
  ["m", 857, 903, "HELL'S KITCHEN", "area"],
  ["m", 1415, 893, "ASTORIA", "area"],
  ["m", 922, 1055, "MIDTOWN", "area"],
  ["m", 1210, 1213, "LONG", "area"],
  ["m", 1210, 1256, "ISLAND CITY", "area"],
  ["m", 277, 1407, "JOURNAL SQUARE", "area"],
  ["m", 770, 1404, "GREENWICH", "area"],
  ["m", 770, 1446, "VILLAGE", "area"],
  ["m", 943, 1546, "EAST VILLAGE", "area"],
  ["m", 797, 612, "NEW JERSEY", "line", -63],
  ["m", 828, 638, "NEW YORK", "line", -63],
  ["m", 1310, 462, "FDR Dr.", "road", -57],
  ["m", 1460, 512, "East River", "water", -54],
  ["m", 1225, 935, "East River", "water", -58],
  ["s", 116, 12, "WEST SIDE", "area"],
  ["s", 440, 140, "Jersey City", "capital"],
  ["s", 742, 232, "New York", "metro"],
  ["s", 791, 40, "LOWER", "area"],
  ["s", 791, 87, "MANHATTAN", "area"],
  ["s", 1265, 14, "GREENPOINT", "area"],
  ["s", 1142, 322, "WILLIAMSBURG", "area"],
  ["s", 847, 528, "BROOKLYN", "area"],
  ["s", 847, 575, "HEIGHTS", "area"],
  ["s", 1265, 716, "BEDFORD-STUYVESANT", "area"],
  ["s", 1247, 886, "BROOKLYN", "borough"],
  ["s", 714, 902, "RED HOOK", "area"],
  ["s", 870, 976, "GOWANUS", "area"],
  ["s", 949, 1077, "PARK SLOPE", "area"],
  ["s", 1241, 1077, "CROWN HEIGHTS", "area"],
  ["s", 690, 1500, "SUNSET PARK", "area"],
  ["s", 1360, 1535, "EAST FLATBUSH", "area"],
  ["s", 1093, 1560, "FLATBUSH -", "area"],
  ["s", 140, 1553, "ST. GEORGE", "area"],
  ["s", 510, 578, "NEW JERSEY", "line", -70],
  ["s", 567, 612, "NEW YORK", "line", -70],
  ["s", 376, 1235, "Upper Bay", "water", -77],
];

/* Names that run off the edge of the map, anchored on their first letter. */
const edgeLabels: Label[] = [
  ["n", 14, 1153, "arlstadt", "town"],
  ["n", 14, 1234, "st", "town"],
  ["n", 14, 1291, "rford", "town"],
  ["n", 1466, 408, "KI", "area"],
  ["n", 1470, 224, "VE", "area"],
  ["m", 1323, 122, "MOTT HAVE", "area"],
  ["m", 1463, 659, "DIT", "area"],
  ["m", 1454, 702, "STE", "area"],
  ["m", 1364, 1257, "SUNNYSI", "area"],
  ["m", 1484, 1497, "M", "area"],
  ["s", 18, 154, "SACK", "area"],
  ["s", 14, 203, "ER", "area"],
  ["s", 16, 249, "RONT", "area"],
  ["s", 14, 498, "ENVILLE", "area"],
  ["s", 1357, 580, "BUSHWIC", "area"],
  ["s", 1426, 1170, "BROW", "area"],
];

type Marker = [string, number, number, string];

const interstates: Marker[] = [
  ["n", 88, 94, "80"],
  ["n", 754, 683, "95"],
  ["n", 1434, 1073, "95"],
  ["n", 1347, 1344, "87"],
  ["n", 564, 1500, "95"],
  ["m", 1415, 392, "278"],
  ["m", 357, 560, "95"],
  ["m", 1433, 1425, "495"],
  ["m", 359, 1532, "78"],
  ["s", 127, 581, "78"],
  ["s", 1096, 519, "278"],
  ["s", 708, 678, "478"],
  ["s", 718, 1359, "278"],
];

const stateRoutes: Marker[] = [
  ["n", 193, 172, "17"],
  ["n", 518, 18, ""],
  ["n", 959, 501, "4"],
  ["n", 841, 1149, "5"],
  ["n", 866, 1235, "63"],
  ["n", 163, 1390, "120"],
  ["n", 1298, 853, "9A"],
  ["m", 127, 117, "3"],
  ["m", 1072, 58, "9A"],
  ["m", 489, 717, "495"],
  ["m", 767, 974, "495"],
  ["m", 1285, 1136, "25"],
  ["m", 112, 1288, "7"],
  ["s", 940, 1294, "27"],
  ["s", 1365, 1340, "27"],
];

const usRoutes: Marker[] = [
  ["n", 1128, 676, "9W"],
  ["n", 719, 1452, "9"],
  ["m", 515, 548, "9"],
  ["m", 33, 1393, "9"],
];

const MapLabel = ({ label, edge }: { label: Label; edge?: boolean }) => {
  const [sheet, sx, sy, text, kind, angle] = label;
  const [x, y] = at(sheet, sx, sy);
  const style = kinds[kind];
  return (
    <text
      x={x}
      y={y}
      dy="0.35em"
      textAnchor={edge ? "start" : "middle"}
      fontSize={style.size}
      fontWeight={style.weight ?? 400}
      fill={style.fill}
      stroke={style.halo ?? "#f6f6f6"}
      strokeWidth="4"
      strokeLinejoin="round"
      paintOrder="stroke"
      transform={angle ? `rotate(${angle} ${x} ${y})` : undefined}
    >
      {text}
    </text>
  );
};

const MarkerText = ({ x, y, text, fill, weight }: { x: number; y: number; text: string; fill: string; weight: number }) => (
  <text x={x} y={y} dy="0.36em" textAnchor="middle" fontSize="18" fontWeight={weight} fill={fill}>
    {text}
  </text>
);

const Interstate = ({ marker: [sheet, sx, sy, text] }: { marker: Marker }) => {
  const [x, y] = at(sheet, sx, sy);
  const w = text.length > 2 ? 23 : 16;
  return (
    <g>
      <path
        d={`M${x - w} ${y - 7}H${x + w}Q${x + w + 1} ${y + 12} ${x} ${y + 17}Q${x - w - 1} ${y + 12} ${x - w} ${y - 7}Z`}
        fill="#3f78c4"
        stroke="#fff"
      />
      <path
        d={`M${x - w} ${y - 9}L${x - w + 1} ${y - 15}L${x - w / 2} ${y - 13}L${x - w / 4} ${y - 16}L${x} ${y - 13}L${x + w / 4} ${y - 16}L${x + w / 2} ${y - 13}L${x + w - 1} ${y - 15}L${x + w} ${y - 9}Z`}
        fill="#cf5f5c"
      />
      <MarkerText x={x} y={y + 2} text={text} fill="#fff" weight={700} />
    </g>
  );
};

const StateRoute = ({ marker: [sheet, sx, sy, text] }: { marker: Marker }) => {
  const [x, y] = at(sheet, sx, sy);
  const w = text.length > 2 ? 20 : 16;
  return (
    <g>
      <rect x={x - w} y={y - 13} width={w * 2} height="26" rx="12" fill="#fff" stroke="#5c5c5c" strokeWidth="2" />
      <MarkerText x={x} y={y} text={text} fill="#333" weight={400} />
    </g>
  );
};

const UsRoute = ({ marker: [sheet, sx, sy, text] }: { marker: Marker }) => {
  const [x, y] = at(sheet, sx, sy);
  return (
    <g>
      <path
        transform={`translate(${x} ${y})`}
        d="M-13-15Q-6-11 0-15 6-11 13-15L18-10Q14-4 17 2 18 11 9 13 3 13 0 16-3 13-9 13-18 11-17 2-14-4-18-10Z"
        fill="#fff"
        stroke="#5c5c5c"
        strokeWidth="2"
      />
      <MarkerText x={x} y={y} text={text} fill="#333" weight={400} />
    </g>
  );
};

const CityMap = () => {
  const [pinX, pinY] = at("n", 290, 818);
  return (
    <MapCanvas viewBox="0 0 1060 2024" preserveAspectRatio="xMidYMin slice" role="img" aria-label="Map of New York">
      <defs>
        <pattern id="avenues" width="21" height="58" patternUnits="userSpaceOnUse" patternTransform="rotate(28)">
          <path d="M0 0V58M0 0H21" stroke="#fff" strokeWidth="5" />
        </pattern>
        <pattern id="blocks" width="58" height="40" patternUnits="userSpaceOnUse" patternTransform="rotate(-10)">
          <path d="M0 0V40M0 0H58" stroke="#fff" strokeWidth="4" />
        </pattern>
        <pattern id="terrace" width="44" height="66" patternUnits="userSpaceOnUse" patternTransform="rotate(32)">
          <path d="M0 0V66M0 0H44" stroke="#fff" strokeWidth="3" />
        </pattern>
        <path id="expressway" d={curve("n 792,628 830,580 880,562 940,590 980,650")} />
      </defs>
      <rect width="1060" height="2024" fill="#e6e6e6" />

      <path d={area("n 560,1568 980,1400 m 945,0 800,450 700,740 600,940 530,1460 420,1568 380,1200 500,600 600,200")} fill="url(#terrace)" opacity="0.5" />
      <path d={area("n 560,60 860,36 1260,36 1180,560 1050,1100 960,1568 760,1568 690,1200 600,760 540,400")} fill="url(#terrace)" opacity="0.25" />
      <path d={area("m 1340,740 1498,820 1498,1568 1100,1568 1130,1200")} fill="url(#terrace)" opacity="0.6" />
      <path d={area("n 1500,560 1500,1568 m 1500,380 1380,200 1340,60 n 1350,1300 1400,1000")} fill="url(#terrace)" />
      <path d={area("s 1060,150 1498,0 1498,1568 1000,1568 960,1220 1040,980 880,600 840,420 1040,440")} fill="url(#blocks)" />
      <path d={area("s 800,640 960,700 1040,960 900,1230 640,1568 590,1568 640,1350 830,1130 770,840")} fill="url(#terrace)" />

      <path d={area(bayAndRivers)} fill="#aadaff" />
      <path d={area(manhattan)} fill="#e6e6e6" />
      {piers.map((p) => (
        <path key={p} d={area(p)} fill="#e6e6e6" />
      ))}
      {slips.map((p) => (
        <path key={p} d={curve(p)} stroke="#e6e6e6" strokeWidth="5" fill="none" />
      ))}
      {districts.map((p) => (
        <path key={p} d={area(p)} fill="#fff5e1" />
      ))}
      <path d={area(manhattan)} fill="url(#avenues)" />
      {parks.map((p) => (
        <path key={p} d={area(p)} fill="#c0ebb2" />
      ))}
      <path d={area("m 1085,475 1135,490 1140,540 1110,545 1080,590 1065,560")} fill="#aadaff" />
      <path d={area("m 785,215 815,240 805,270 775,240")} fill="#aadaff" />

      <g fill="none" strokeLinecap="round" strokeLinejoin="round">
        {rivers.map(([width, line]) => (
          <path key={line} d={curve(line)} stroke="#aadaff" strokeWidth={width} />
        ))}
        {rails.map((line) => (
          <path key={line} d={curve(line)} stroke="#cfd1d4" strokeWidth="3" />
        ))}
        {streets.map((line) => (
          <path key={line} d={curve(line)} stroke="#fff" strokeWidth="4" />
        ))}
        <path d={curve(stateLine)} stroke="#8a9aa8" strokeWidth="1.500" strokeDasharray="6 5" strokeLinecap="butt" />
        {highways.map(([width, line]) => (
          <path key={line} d={curve(line)} stroke="#f5ca62" strokeWidth={width + 3} />
        ))}
        {highways.map(([width, line]) => (
          <path key={line} d={curve(line)} stroke="#fee49c" strokeWidth={width - 1} />
        ))}
      </g>

      {interstates.map((m) => (
        <Interstate key={m.join()} marker={m} />
      ))}
      {stateRoutes.map((m) => (
        <StateRoute key={m.join()} marker={m} />
      ))}
      {usRoutes.map((m) => (
        <UsRoute key={m.join()} marker={m} />
      ))}
      {labels.map((l) => (
        <MapLabel key={l.join()} label={l} />
      ))}
      {edgeLabels.map((l) => (
        <MapLabel key={l.join()} label={l} edge />
      ))}
      <text fontSize="21" fill="#7f4212" stroke="#f6f6f6" strokeWidth="4" paintOrder="stroke">
        <textPath href="#expressway">I-95 Express</textPath>
      </text>

      <g transform={`translate(${pinX} ${pinY})`}>
        <path d="M0 0Q-3-9-11-16A15.500 15.500 0 1 1 11-16Q3-9 0 0Z" fill="#2bb8f5" />
        <path
          d="M0-35q1.500 1 1.500 4v3l8 5v2l-8-2v5l2.500 2v1.500L0-16l-4 1.500V-16l2.500-2v-5l-8 2v-2l8-5v-3q0-3 1.500-4Z"
          fill="#fff"
        />
      </g>
    </MapCanvas>
  );
};

/* ---------- data ---------- */

const placeTypes = ["Restaurants", "Coffee", "Bars", "Banks", "Parks"];

const places = [
  { name: "Greek Eats", miles: "0.02" },
  { name: "Pizza Park", miles: "0.02" },
  { name: "Bagelworks", miles: "0.02" },
  { name: "TD Bank", miles: "0.02" },
  { name: "Kung Fu Tea", miles: "0.03" },
  { name: "Cafe Fresco", miles: "0.04" },
  { name: "East 67th Street Market", miles: "0.04" },
  { name: "Enterprise Rent-A-Car", miles: "0.05" },
  { name: "Java Girl", miles: "0.05" },
  { name: "Dunkin' Donuts", miles: "0.06" },
];

export default function App() {
  const [address, setAddress] = useState("1224 1st Avenue, New York, NY, USA");
  const [type, setType] = useState("");
  const [query, setQuery] = useState("");
  const shown = places.filter((p) => p.name.toLowerCase().includes(query.toLowerCase()));

  return (
    <Window>
      <GlobalStyle />
      <TabStrip aria-label="Tabs">
        {tabs.map((tab) => (
          <Tab key={tab.title} $active={tab.active}>
            {tab.icon}
            <TabTitle $fade={!tab.active}>
              {tab.active && (
                <EmojiRow>
                  <Croissant />
                  <Beer />
                  <Guitar />
                  <Football />
                </EmojiRow>
              )}
              {tab.title}
              {tab.active && (
                <EmojiRow $after>
                  <Plane />
                  <Bank />
                  <Hospital />
                  <Church />
                </EmojiRow>
              )}
            </TabTitle>
            <CloseButton aria-label="Close tab">
              <Cross />
            </CloseButton>
            <TabDivider $hidden={!tab.divider} />
          </Tab>
        ))}
        <NewTabButton aria-label="New tab">
          <svg width="24" height="24" viewBox="0 0 24 24" stroke="currentColor" strokeWidth="3.500" strokeLinecap="round">
            <path d="M12 2v20M2 12h20" />
          </svg>
        </NewTabButton>
      </TabStrip>

      <Toolbar>
        <ToolButton $muted aria-label="Back">
          <svg width="28" height="28" viewBox="0 0 28 28" fill="none" stroke="currentColor" strokeWidth="3" strokeLinecap="round">
            <path d="M26 14H3M14 3 3 14l11 11" />
          </svg>
        </ToolButton>
        <ToolButton $muted aria-label="Forward">
          <svg width="28" height="28" viewBox="0 0 28 28" fill="none" stroke="currentColor" strokeWidth="3" strokeLinecap="round">
            <path d="M2 14h23M14 3l11 11-11 11" />
          </svg>
        </ToolButton>
        <ToolButton aria-label="Reload">
          <svg width="28" height="28" viewBox="0 0 28 28" fill="none">
            <path d="M25 17A11.600 11.600 0 1 1 22.500 6" stroke="currentColor" strokeWidth="3" />
            <path d="M27 1v11H16Z" fill="currentColor" />
          </svg>
        </ToolButton>
        <AddressBar>
          <svg width="28" height="28" viewBox="0 0 28 28" fill="none" stroke="currentColor" strokeWidth="3">
            <circle cx="14" cy="14" r="12" />
            <path d="M14 12.500v8M14 7.500v3" />
          </svg>
          <AddressInput aria-label="Address" defaultValue="localhost:3000" />
          <svg width="32" height="32" viewBox="0 0 32 32" fill="none" stroke="currentColor" strokeWidth="2.800">
            <path d="M16 4.500l3.500 8.300 9 .8-6.800 5.900 2 8.800L16 23.600l-7.700 4.700 2-8.800-6.800-5.900 9-.8Z" />
          </svg>
        </AddressBar>
        {extensions.map((ext) => (
          <ToolButton key={ext.name} aria-label={ext.name}>
            {ext.icon}
            {ext.badge && <CountBadge>{ext.badge}</CountBadge>}
          </ToolButton>
        ))}
        <ToolDivider />
        <AvatarButton aria-label="Profile">
          <Avatar />
        </AvatarButton>
        <MenuButton aria-label="Menu">
          <svg width="8" height="28" viewBox="0 0 8 28" fill="currentColor">
            <circle cx="4" cy="4" r="3" />
            <circle cx="4" cy="14" r="3" />
            <circle cx="4" cy="24" r="3" />
          </svg>
        </MenuButton>
      </Toolbar>

      <Viewport>
        <Page>
          <Header>
            <FaMapMarkedAlt size={74} />
            <HeaderCenter>
              <SearchButton aria-label="Search">
                <FaSearch size={26} />
              </SearchButton>
            </HeaderCenter>
          </Header>

          <Columns>
            <Sidebar>
              <Card>
                <CardHeader>
                  <CardLabel htmlFor="address">Autocomplete Search</CardLabel>
                </CardHeader>
                <CardBody>
                  <AddressField id="address" value={address} onChange={(e) => setAddress(e.target.value)} />
                </CardBody>
              </Card>
              <Card>
                <CardHeader>
                  <CardTitle id="type-title">Filter by type</CardTitle>
                </CardHeader>
                <Options aria-labelledby="type-title">
                  {placeTypes.map((name) => (
                    <Option key={name}>
                      <Radio type="radio" name="type" checked={type === name} onChange={() => setType(name)} />
                      {name}
                    </Option>
                  ))}
                </Options>
              </Card>
            </Sidebar>

            <section>
              <FilterGroup onSubmit={(e) => e.preventDefault()}>
                <FilterInput
                  aria-label="Filter by name"
                  placeholder="Filter by name..."
                  value={query}
                  onChange={(e) => setQuery(e.target.value)}
                />
                <LocateButton type="button" aria-label="Use my location">
                  <FaMapMarkerAlt size={26} />
                </LocateButton>
              </FilterGroup>
              <Table>
                <thead>
                  <tr>
                    <HeadCell scope="col">Places near 1224 1ST AVENUE, NEW YORK, NY, USA</HeadCell>
                    <HeadCell scope="col">Distance</HeadCell>
                  </tr>
                </thead>
                <tbody>
                  {shown.map((place) => (
                    <tr key={place.name}>
                      <NameCell scope="row">{place.name}</NameCell>
                      <DistanceCell>
                        {place.miles} <i>miles</i>
                      </DistanceCell>
                    </tr>
                  ))}
                </tbody>
              </Table>
            </section>

            <MapPane>
              <CityMap />
              <FullscreenButton aria-label="Toggle fullscreen view">
                <svg width="36" height="36" viewBox="0 0 36 36" fill="none" stroke="#666" strokeWidth="5">
                  <path d="M2.500 12V2.500H12M24 2.500h9.500V12M33.500 24v9.500H24M12 33.500H2.500V24" />
                </svg>
              </FullscreenButton>
            </MapPane>
          </Columns>
        </Page>
        <ScrollTrack>
          <ScrollThumb />
        </ScrollTrack>
      </Viewport>
    </Window>
  );
}
